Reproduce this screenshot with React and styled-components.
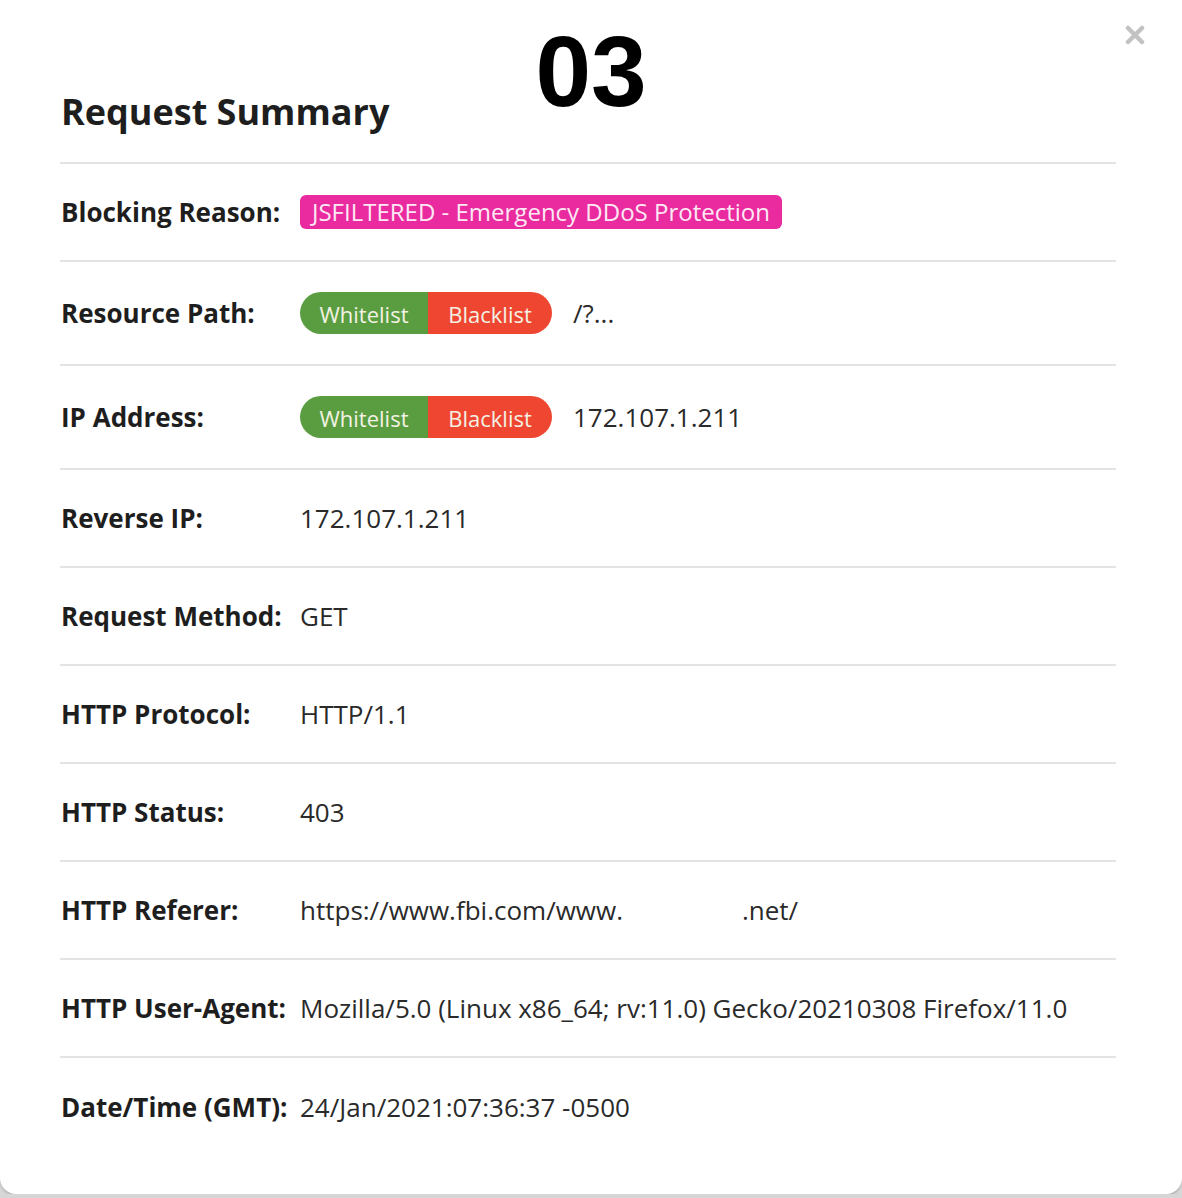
import styled, { createGlobalStyle } from "styled-components";

const GlobalStyle = createGlobalStyle`
  html, body {
    margin: 0;
    padding: 0;
    background: #d6d6d6;
  }
  * {
    box-sizing: border-box;
  }
`;

const Modal = styled.div`
  position: relative;
  width: 1182px;
  height: 1194px;
  background: #fff;
  border-radius: 0 0 16px 16px;
  box-shadow: 0 2px 2px rgba(0, 0, 0, 0.15);
  padding: 0 66px 0 60px;
  font-family: "Open Sans", "Liberation Sans", sans-serif;
  color: #222;
`;

const Header = styled.div`
  height: 164px;
  display: flex;
  align-items: flex-end;
  padding-bottom: 32px;
  border-bottom: 2px solid #e3e3e3;
`;

const Title = styled.h2`
  margin: 0 0 0 1px;
  font-size: 36px;
  font-weight: 700;
  line-height: 1;
  color: #1e1e1e;
`;

const Number = styled.div`
  position: absolute;
  top: 21px;
  left: 0;
  right: 0;
  text-align: center;
  font-family: "Liberation Sans", Arial, sans-serif;
  font-weight: 700;
  font-size: 100px;
  line-height: 1;
  color: #000;
  pointer-events: none;
`;

const Close = styled.button`
  position: absolute;
  top: 25px;
  right: 37px;
  width: 20px;
  height: 20px;
  padding: 0;
  border: none;
  background: none;
  cursor: pointer;
`;

const Row = styled.div`
  display: flex;
  align-items: center;
  padding: 30px 0;
  min-height: 98px;
  border-bottom: ${(p) => (p.last ? "none" : "2px solid #e3e3e3")};
`;

const Label = styled.div`
  width: 240px;
  flex-shrink: 0;
  padding-left: 1px;
  font-size: 26px;
  font-weight: 700;
  line-height: 36px;
  color: #1e1e1e;
  white-space: nowrap;
`;

const Value = styled.div`
  display: flex;
  align-items: center;
  gap: 21px;
  font-size: 26px;
  line-height: 36px;
  color: #2a2a2a;
  white-space: nowrap;
`;

const Reason = styled.span`
  display: inline-block;
  background: #ea2a9f;
  color: #fde8f4;
  border-radius: 6px;
  padding: 0 12px;
  height: 34px;
  line-height: 34px;
  font-size: 24px;
`;

const Toggle = styled.div`
  display: flex;
  height: 42px;
  border-radius: 21px;
  overflow: hidden;
`;

const ToggleButton = styled.span`
  display: inline-flex;
  align-items: center;
  justify-content: center;
  height: 42px;
  width: ${(p) => p.w}px;
  background: ${(p) => p.bg};
  color: #f3f1e3;
  font-size: 22px;
  padding-top: 2px;
`;

const Redacted = styled.span`
  display: inline-block;
  width: 119px;
`;

const ListToggle = () => (
  <Toggle>
    <ToggleButton bg="#599d40" w={128}>Whitelist</ToggleButton>
    <ToggleButton bg="#ef4631" w={124}>Blacklist</ToggleButton>
  </Toggle>
);

const App = () => {
  const rows = [
    { label: "Reverse IP:", value: "172.107.1.211" },
    { label: "Request Method:", value: "GET" },
    { label: "HTTP Protocol:", value: "HTTP/1.1" },
    { label: "HTTP Status:", value: "403" },
    {
      label: "HTTP Referer:",
      value: (
        <span>
          https://www.fbi.com/www.<Redacted />.net/
        </span>
      ),
    },
    {
      label: "HTTP User-Agent:",
      value: "Mozilla/5.0 (Linux x86_64; rv:11.0) Gecko/20210308 Firefox/11.0",
    },
    { label: "Date/Time (GMT):", value: "24/Jan/2021:07:36:37 -0500" },
  ];

  return (
    <>
      <GlobalStyle />
      <Modal>
        <Number>03</Number>
        <Close aria-label="Close">
          <svg width="20" height="20" viewBox="0 0 20 20">
            <path d="M3 3 L17 17 M17 3 L3 17" stroke="#c2c2c2" strokeWidth="4.5" strokeLinecap="round" />
          </svg>
        </Close>
        <Header>
          <Title>Request Summary</Title>
        </Header>
        <Row>
          <Label>Blocking Reason:</Label>
          <Value>
            <Reason>JSFILTERED - Emergency DDoS Protection</Reason>
          </Value>
        </Row>
        <Row>
          <Label>Resource Path:</Label>
          <Value>
            <ListToggle />
            <span>/?...</span>
          </Value>
        </Row>
        <Row>
          <Label>IP Address:</Label>
          <Value>
            <ListToggle />
            <span>172.107.1.211</span>
          </Value>
        </Row>
        {rows.map((row, index) => (
          <Row key={row.label} last={index === rows.length - 1}>
            <Label>{row.label}</Label>
            <Value>{row.value}</Value>
          </Row>
        ))}
      </Modal>
    </>
  );
};

export default App;
